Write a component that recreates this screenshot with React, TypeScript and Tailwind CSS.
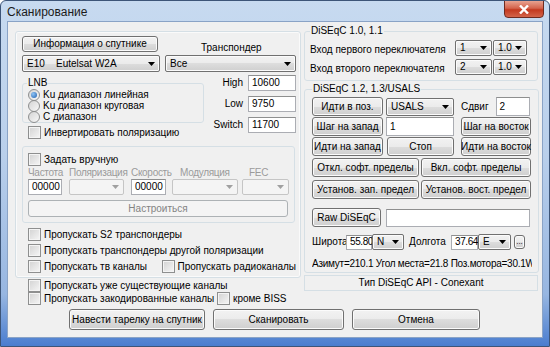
import React from 'react';

const btn =
  'flex items-center justify-center border border-[#707070] rounded-[3px] bg-[linear-gradient(#f2f2f2,#ebebeb_50%,#dddddd_50%,#cfcfcf)] shadow-[inset_0_0_0_1px_#fbfbfb] text-black whitespace-nowrap';
const btnOff =
  'flex items-center justify-center border border-[#adb2b5] rounded-[3px] bg-[#f4f4f4] text-[#838383] whitespace-nowrap';
const field = 'flex items-center border border-[#abadb3] border-t-[#8e8f8f] bg-white px-[3px] text-black whitespace-nowrap';

function Btn({ children, className = '', disabled = false }: { children: React.ReactNode; className?: string; disabled?: boolean }) {
  return <div className={`${disabled ? btnOff : btn} ${className}`}>{children}</div>;
}

function Field({ value = '', className = '' }: { value?: string; className?: string }) {
  return <div className={`${field} ${className}`}>{value}</div>;
}

function Arrow({ off = false }: { off?: boolean }) {
  return (
    <svg width="7" height="4" viewBox="0 0 7 4" className="shrink-0">
      <path d="M0 0h7L3.5 4z" fill={off ? '#a0a0a0' : '#000'} />
    </svg>
  );
}

function Combo({ children, className = '', disabled = false }: { children?: React.ReactNode; className?: string; disabled?: boolean }) {
  return (
    <div
      className={`flex items-center justify-between rounded-[2px] pl-[4px] pr-[4px] whitespace-nowrap ${
        disabled
          ? 'border border-[#c5c5c5] bg-[#f4f4f4]'
          : 'border border-[#707070] bg-[linear-gradient(#f2f2f2,#ebebeb_50%,#dddddd_50%,#cfcfcf)] shadow-[inset_0_0_0_1px_#fbfbfb]'
      } ${className}`}
    >
      <div className="flex items-center">{children}</div>
      <Arrow off={disabled} />
    </div>
  );
}

function Check({ label, className = '' }: { label: string; className?: string }) {
  return (
    <div className={`flex items-center gap-[3px] h-[13px] whitespace-nowrap ${className}`}>
      <div className="w-[13px] h-[13px] border border-[#8e8f8f] bg-[linear-gradient(135deg,#d2d2d2,#f6f6f6)] shadow-[inset_0_0_0_1px_#f4f4f4] shrink-0" />
      <span>{label}</span>
    </div>
  );
}

function Radio({ label, checked = false }: { label: string; checked?: boolean }) {
  return (
    <div className="flex items-center gap-[3px] h-[11px] whitespace-nowrap">
      <div className="w-[12px] h-[12px] rounded-full border border-[#8e8f8f] bg-[linear-gradient(135deg,#d4d4d4,#f8f8f8)] flex items-center justify-center shrink-0">
        {checked && <div className="w-[6px] h-[6px] rounded-full bg-[radial-gradient(circle_at_35%_35%,#8fc4f5,#1f5fae)]" />}
      </div>
      <span>{label}</span>
    </div>
  );
}

export default function App() {
  return (
    <div className="w-[550px] h-[347px] flex flex-col overflow-hidden rounded-t-[6px] border border-[#3d5578] bg-[linear-gradient(180deg,#c7daf0_0%,#b9cfeb_45%,#97b6e1_85%,#4a7dcf_100%)] font-['Liberation_Sans',sans-serif] text-[10px] leading-[12px] text-black">
      {/* title bar */}
      <div className="h-[20px] flex items-start justify-between pl-[6px] pr-[5px] shrink-0">
        <span className="mt-[4px] text-[12px] leading-[14px] text-[#1b1b1b]">Сканирование</span>
        <div className="-mt-[1px] w-[40px] h-[18px] rounded-b-[4px] border border-[#6e2b20] bg-[linear-gradient(#e8a391,#d4644d_45%,#c3391f_55%,#d3644a)] flex items-center justify-center">
          <svg width="10" height="9" viewBox="0 0 10 9">
            <path d="M1 0.5l8 8M9 0.5l-8 8" stroke="#fff" strokeWidth="2.4" />
          </svg>
        </div>
      </div>

      {/* client */}
      <div className="flex-1 mx-[6px] mb-[8px] border border-[#8aa3c6] bg-[#f0f0f0] flex flex-col">
        <div className="flex gap-[3px] pl-[7px] pt-[9px]">
          {/* left column */}
          <div className="w-[286px] flex flex-col">
            <div className="h-[247px] border border-[#d5dfe5] rounded-[3px] shadow-[inset_0_0_0_1px_#fafafa] pl-[6px] pt-[4px] pr-[4px] flex flex-col">
              <div className="flex items-center h-[16px]">
                <Btn className="w-[136px] h-[16px]">Информация о спутнике</Btn>
                <span className="ml-[43px] mt-[8px]">Транспондер</span>
              </div>
              <div className="flex mt-[3px] gap-[5px]">
                <Combo className="w-[139px] h-[17px]">
                  <span className="w-[29px]">E10</span>
                  <span>Eutelsat W2A</span>
                </Combo>
                <Combo className="w-[132px] h-[17px]">Все</Combo>
              </div>

              <div className="flex mt-[5px]">
                <div className="flex flex-col w-[191px]">
                  <fieldset className="border border-[#d5dfe5] rounded-[3px] w-[182px] h-[46px] pl-[5px] flex flex-col">
                    <legend className="px-[1px] -ml-[1px] leading-[12px]">LNB</legend>
                    <Radio label="Ku диапазон линейная" checked />
                    <Radio label="Ku диапазон круговая" />
                    <Radio label="С диапазон" />
                  </fieldset>
                  <Check label="Инвертировать поляризацию" className="mt-[3px] ml-[6px]" />
                </div>
                <div className="flex flex-col gap-[5px] -mt-[2px]">
                  {[
                    ['High', '10600'],
                    ['Low', '9750'],
                    ['Switch', '11700'],
                  ].map(([l, v]) => (
                    <div key={l} className="flex items-center">
                      <span className="w-[43px] text-right pr-[5px]">{l}</span>
                      <Field value={v} className="w-[48px] h-[16px]" />
                    </div>
                  ))}
                </div>
              </div>

              <div className="mt-[7px] w-[273px] h-[77px] border border-[#d5dfe5] rounded-[3px] pl-[5px] pt-[6px] flex flex-col">
                <Check label="Задать вручную" />
                <div className="flex text-[#9b9b9b] h-[11px] items-center mt-[1px] tracking-[-0.3px]">
                  <span className="w-[41px]">Частота</span>
                  <span className="w-[62px]">Поляризация</span>
                  <span className="w-[49px]">Скорость</span>
                  <span className="w-[69px]">Модуляция</span>
                  <span>FEC</span>
                </div>
                <div className="flex h-[16px] mt-[1px]">
                  <Field value="00000" className="w-[34px] h-[16px]" />
                  <Combo disabled className="w-[55px] h-[16px] ml-[7px]" />
                  <Field value="00000" className="w-[35px] h-[16px] ml-[7px]" />
                  <Combo disabled className="w-[66px] h-[16px] ml-[6px]" />
                  <Combo disabled className="w-[47px] h-[16px] ml-[4px]" />
                </div>
                <Btn disabled className="w-[260px] h-[17px] mt-[5px]">
                  Настроиться
                </Btn>
              </div>

              <div className="flex flex-col gap-[3px] mt-[5px] pl-[6px]">
                <Check label="Пропускать S2 транспондеры" />
                <Check label="Пропускать транспондеры другой поляризации" />
                <div className="flex">
                  <Check label="Пропускать тв каналы" className="w-[139px]" />
                  <Check label="Пропускать радиоканалы" />
                </div>
              </div>
            </div>

            <div className="flex flex-col mt-[1px] pl-[13px]">
              <Check label="Пропускать уже существующие каналы" />
              <div className="flex">
                <Check label="Пропускать закодированные каналы" className="w-[189px]" />
                <Check label="кроме BISS" />
              </div>
            </div>
          </div>

          {/* right column */}
          <div className="w-[234px] flex flex-col -mt-[6px]">
            <fieldset className="border border-[#d5dfe5] rounded-[3px] h-[56px] pl-[5px] pr-[10px] flex flex-col gap-[3px] pt-[3px]">
              <legend className="px-[1px] leading-[12px]">DiSEqC 1.0, 1.1</legend>
              {[
                ['Вход первого переключателя', '1'],
                ['Вход второго переключателя', '2'],
              ].map(([l, v]) => (
                <div key={l} className="flex items-center justify-between whitespace-nowrap">
                  <span className="mt-[3px]">{l}</span>
                  <div className="flex gap-[1px]">
                    <Combo className="w-[37px] h-[16px]">{v}</Combo>
                    <Combo className="w-[34px] h-[16px]">1.0</Combo>
                  </div>
                </div>
              ))}
            </fieldset>

            <fieldset className="mt-[2px] border border-[#d5dfe5] rounded-[3px] h-[190px] pl-[7px] pr-[6px] pt-[2px] flex flex-col">
              <legend className="px-[1px] leading-[12px]">DiSEqC 1.2, 1.3/USALS</legend>
              <div className="flex items-center h-[19px]">
                <Btn className="w-[71px] h-[19px]">Идти в поз.</Btn>
                <Combo className="w-[68px] h-[18px] ml-[3px]">USALS</Combo>
                <span className="ml-[7px]">Сдвиг</span>
                <Field value="2" className="w-[34px] h-[19px] ml-[7px]" />
              </div>
              <div className="flex items-center h-[19px] mt-[1px]">
                <Btn className="w-[71px] h-[19px]">Шаг на запад</Btn>
                <Field value="1" className="w-[68px] h-[19px] ml-[3px]" />
                <Btn className="w-[70px] h-[19px] ml-[7px]">Шаг на восток</Btn>
              </div>
              <div className="flex items-center h-[19px] mt-[1px]">
                <Btn className="w-[71px] h-[19px]">Идти на запад</Btn>
                <Btn className="w-[67px] h-[19px] ml-[4px]">Стоп</Btn>
                <Btn className="w-[70px] h-[19px] ml-[7px]">Идти на восток</Btn>
              </div>
              <div className="flex items-center h-[19px] mt-[2px] gap-[2px]">
                <Btn className="w-[107px] h-[19px]">Откл. софт. пределы</Btn>
                <Btn className="w-[110px] h-[19px]">Вкл. софт. пределы</Btn>
              </div>
              <div className="flex items-center h-[19px] mt-[3px] gap-[2px]">
                <Btn className="w-[107px] h-[19px]">Установ. зап. предел</Btn>
                <Btn className="w-[110px] h-[19px]">Установ. вост. предел</Btn>
              </div>
              <div className="flex items-center h-[19px] mt-[9px]">
                <Btn className="w-[69px] h-[19px]">Raw DiSEqC</Btn>
                <Field className="w-[144px] h-[18px] ml-[5px]" />
              </div>
              <div className="flex items-center h-[16px] mt-[7px]">
                <span className="w-[34px]">Широта</span>
                <Field value="55.80" className="w-[26px] h-[15px] px-[0px] tracking-[-0.4px]" />
                <Combo className="w-[32px] h-[16px]">N</Combo>
                <span className="ml-[5px] w-[42px]">Долгота</span>
                <Field value="37.64" className="w-[27px] h-[15px] px-[1px] tracking-[-0.4px]" />
                <Combo className="w-[33px] h-[16px]">E</Combo>
                <Btn className="w-[11px] h-[14px] ml-[3px] text-[8px]">...</Btn>
              </div>
              <div className="mt-[8px] w-[220px] overflow-hidden whitespace-nowrap tracking-[-0.25px]">
                Азимут=210.1 Угол места=21.8 Поз.мотора=30.1W
              </div>
            </fieldset>

            <div className="mt-[2px] h-[16px] border border-[#d5dfe5] flex items-center justify-center">Тип DiSEqC API - Conexant</div>
          </div>
        </div>

        <div className="flex pl-[61px] mt-[4px] gap-[8px]">
          <Btn className="w-[136px] h-[21px]">Навести тарелку на спутник</Btn>
          <Btn className="w-[131px] h-[21px]">Сканировать</Btn>
          <Btn className="w-[128px] h-[21px]">Отмена</Btn>
        </div>
      </div>
    </div>
  );
}
